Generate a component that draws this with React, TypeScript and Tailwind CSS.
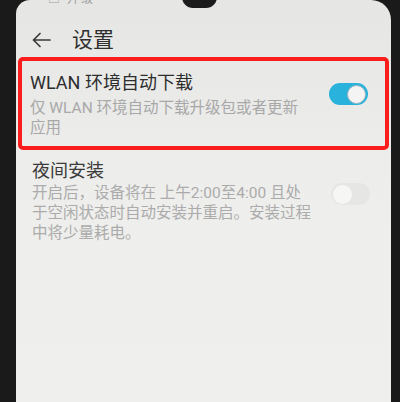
import { useState } from 'react'

const fontCls = "font-['Roboto','Noto_Sans_CJK_SC',sans-serif]"

function Toggle({ on }: { on: boolean }) {
  return on ? (
    <div className="w-[39px] h-[22px] rounded-full bg-[#28b2dc] flex items-center justify-end pr-[2px]">
      <div className="w-[19px] h-[19px] rounded-full bg-[#f4f4f4] border border-[#9fb6bf]" />
    </div>
  ) : (
    <div className="w-[39px] h-[22px] rounded-full bg-[#e6e6e5] flex items-center pl-[2px]">
      <div className="w-[19px] h-[19px] rounded-full bg-[#f6f6f5]" />
    </div>
  )
}

export default function App() {
  const [wlan, setWlan]   = useState(true)
  const [night, setNight] = useState(false)

  return (
    <div className={`w-[400px] h-[402px] bg-[#1a1a1a] flex pl-[16px] pr-[9px] overflow-hidden ${fontCls}`}>
      <div className="relative flex-1 flex flex-col bg-gradient-to-b from-[#e6e6e4] via-[#eeeeec] to-[#efefed] rounded-tl-[14px] rounded-tr-[20px] overflow-hidden">
        {/* notch */}
        <div className="absolute left-[166px] top-[-14px] w-[35px] h-[22px] rounded-full bg-[#1c1c1c]" />

        {/* status bar, cut off at the top of the photo */}
        <div className="h-[22px] overflow-hidden">
          <div className="mt-[-8px] ml-[32px] text-[12px] leading-[14px] text-[#a0a0a0] tracking-[2px]">▣ 升级</div>
        </div>

        {/* header */}
        <div className="h-[35px] flex items-center pl-[16px] gap-[21px]">
          <svg width="19" height="16" viewBox="0 0 19 16" fill="none" stroke="#3a3a3a" strokeWidth="1.7" strokeLinecap="round" strokeLinejoin="round">
            <path d="M18 8H1.5M8 1.5L1.5 8L8 14.5" />
          </svg>
          <span className="text-[21px] text-[#2f2f2f] leading-none mt-[1px]">设置</span>
        </div>

        {/* highlighted row */}
        <div className="ml-[2px] mr-[2px] border-[4px] border-[#fb1c1c] rounded-[5px] flex pl-[8px] pr-[17px] pt-[10px] pb-[8px]">
          <div className="flex-1 whitespace-nowrap">
            <div className="text-[18px] leading-[24px] text-[#2d2d2d]">WLAN 环境自动下载</div>
            <div className="mt-[3px] text-[15.5px] leading-[20px] text-[#a8a8a8]">
              <div>仅 WLAN 环境自动下载升级包或者更新</div>
              <div>应用</div>
            </div>
          </div>
          <button onClick={() => setWlan(!wlan)} className="self-start mt-[12px]">
            <Toggle on={wlan} />
          </button>
        </div>

        {/* night install row */}
        <div className="flex pl-[16px] pr-[21px] pt-[9px]">
          <div className="flex-1 whitespace-nowrap">
            <div className="text-[18px] leading-[24px] text-[#3a3a3a]">夜间安装</div>
            <div className="text-[15.5px] leading-[20px] text-[#ababab]">
              <div>开启后，设备将在 上午2:00至4:00 且处</div>
              <div>于空闲状态时自动安装并重启。安装过程</div>
              <div>中将少量耗电。</div>
            </div>
          </div>
          <button onClick={() => setNight(!night)} className="self-start mt-[24px]">
            <Toggle on={night} />
          </button>
        </div>
      </div>
    </div>
  )
}
